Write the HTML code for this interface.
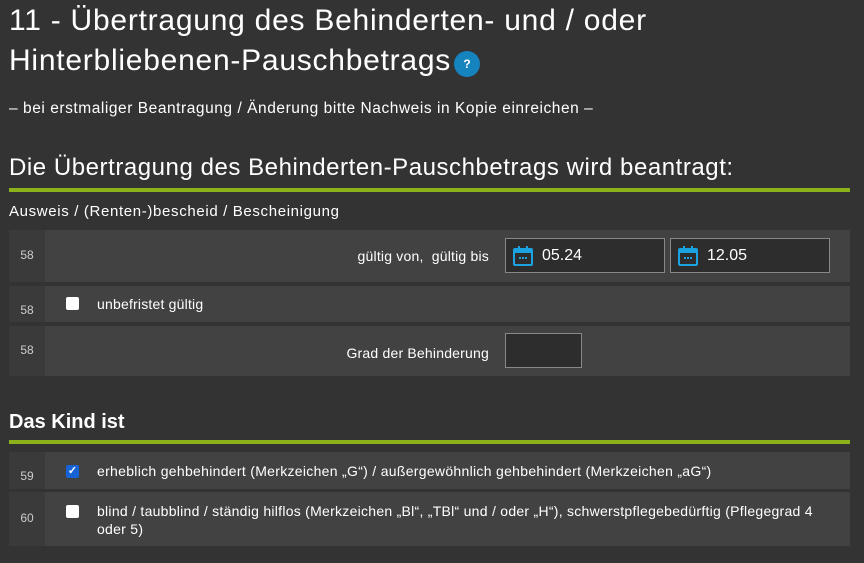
<!DOCTYPE html>
<html><head><meta charset="utf-8"><style>
body{margin:0;width:864px;height:563px;background:#333;color:#fff;font-family:"Liberation Sans",sans-serif;overflow:hidden;position:relative}
.a{position:absolute;white-space:nowrap}
.h1{font-size:30px;left:9px;letter-spacing:0.75px}
.q{position:absolute;left:454px;top:51px;width:26px;height:26px;border-radius:50%;background:#1583bd;font-size:12px;font-weight:bold;text-align:center;line-height:26px}
.line{position:absolute;left:9px;width:841px;height:4px;background:#8cb21b}
.row{position:absolute;left:9px;width:841px;background:#3a3a3a}
.num{position:absolute;left:0;width:36px;font-size:12px;color:#ccc;text-align:center}
.ct{position:absolute;left:36px;right:0;top:0;bottom:0;background:#424242}
.inp{position:absolute;background:#2d2d2d;border:1px solid #888;box-sizing:border-box}
.cb{position:absolute;width:13px;height:13px;background:#fff;border-radius:2px}
.t{font-size:14px;letter-spacing:0.2px}
</style></head><body>
<div class="a h1" style="top:4px">11 - Übertragung des Behinderten- und / oder</div>
<div class="a h1" style="top:44px">Hinterbliebenen-Pauschbetrags</div>
<div class="q">?</div>
<div class="a" style="left:9px;top:100px;font-size:15.5px;letter-spacing:0.55px">– bei erstmaliger Beantragung / Änderung bitte Nachweis in Kopie einreichen –</div>
<div class="a" style="left:9px;top:154px;font-size:24px;letter-spacing:0.55px">Die Übertragung des Behinderten-Pauschbetrags wird beantragt:</div>
<div class="line" style="top:188px"></div>
<div class="a" style="left:9px;top:203px;font-size:15px;letter-spacing:0.65px">Ausweis / (Renten-)bescheid / Bescheinigung</div>

<div class="row" style="top:230px;height:52px"><div class="num" style="top:18px">58</div><div class="ct">
<div class="a t" style="right:361px;top:18px">gültig von,&nbsp; gültig bis</div>
<div class="inp" style="left:460px;top:8px;width:160px;height:35px">
<svg style="position:absolute;left:7px;top:7px" width="20" height="20" viewBox="0 0 20 20"><rect x="1" y="3" width="18" height="16" rx="1" fill="none" stroke="#1aa3e0" stroke-width="2"/><rect x="1" y="3" width="18" height="4" fill="#1aa3e0"/><rect x="5" y="0" width="2" height="5" fill="#1aa3e0"/><rect x="13" y="0" width="2" height="5" fill="#1aa3e0"/><rect x="6" y="11" width="2" height="2" fill="#1aa3e0"/><rect x="9" y="11" width="2" height="2" fill="#1aa3e0"/><rect x="12" y="11" width="2" height="2" fill="#1aa3e0"/></svg>
<span class="a" style="left:36px;top:8px;font-size:16px">05.24</span></div>
<div class="inp" style="left:625px;top:8px;width:160px;height:35px">
<svg style="position:absolute;left:7px;top:7px" width="20" height="20" viewBox="0 0 20 20"><rect x="1" y="3" width="18" height="16" rx="1" fill="none" stroke="#1aa3e0" stroke-width="2"/><rect x="1" y="3" width="18" height="4" fill="#1aa3e0"/><rect x="5" y="0" width="2" height="5" fill="#1aa3e0"/><rect x="13" y="0" width="2" height="5" fill="#1aa3e0"/><rect x="6" y="11" width="2" height="2" fill="#1aa3e0"/><rect x="9" y="11" width="2" height="2" fill="#1aa3e0"/><rect x="12" y="11" width="2" height="2" fill="#1aa3e0"/></svg>
<span class="a" style="left:36px;top:8px;font-size:16px">12.05</span></div>
</div></div>

<div class="row" style="top:286px;height:36px"><div class="num" style="top:17px">58</div><div class="ct">
<div class="cb" style="left:21px;top:11px"></div><div class="a t" style="left:52px;top:10px">unbefristet gültig</div></div></div>

<div class="row" style="top:326px;height:50px"><div class="num" style="top:17px">58</div><div class="ct">
<div class="a t" style="right:361px;top:19px">Grad der Behinderung</div>
<div class="inp" style="left:460px;top:7px;width:77px;height:35px"></div></div></div>

<div class="a" style="left:9px;top:411px;font-size:20px;font-weight:bold">Das Kind ist</div>
<div class="line" style="top:440px"></div>

<div class="row" style="top:452px;height:37px"><div class="num" style="top:17px">59</div><div class="ct">
<div class="cb" style="left:21px;top:13px;background:#1763d6;color:#fff;font-size:11px;line-height:13px;text-align:center;font-weight:bold">✓</div>
<div class="a t" style="left:52px;top:11px;letter-spacing:0.3px">erheblich gehbehindert (Merkzeichen „G“) / außergewöhnlich gehbehindert (Merkzeichen „aG“)</div></div></div>

<div class="row" style="top:492px;height:54px"><div class="num" style="top:19px">60</div><div class="ct">
<div class="cb" style="left:21px;top:13px"></div>
<div class="a t" style="left:52px;top:10px;line-height:18px;letter-spacing:0.27px">blind / taubblind / ständig hilflos (Merkzeichen „Bl“, „TBl“ und / oder „H“), schwerstpflegebedürftig (Pflegegrad 4<br>oder 5)</div></div></div>
</body></html>
